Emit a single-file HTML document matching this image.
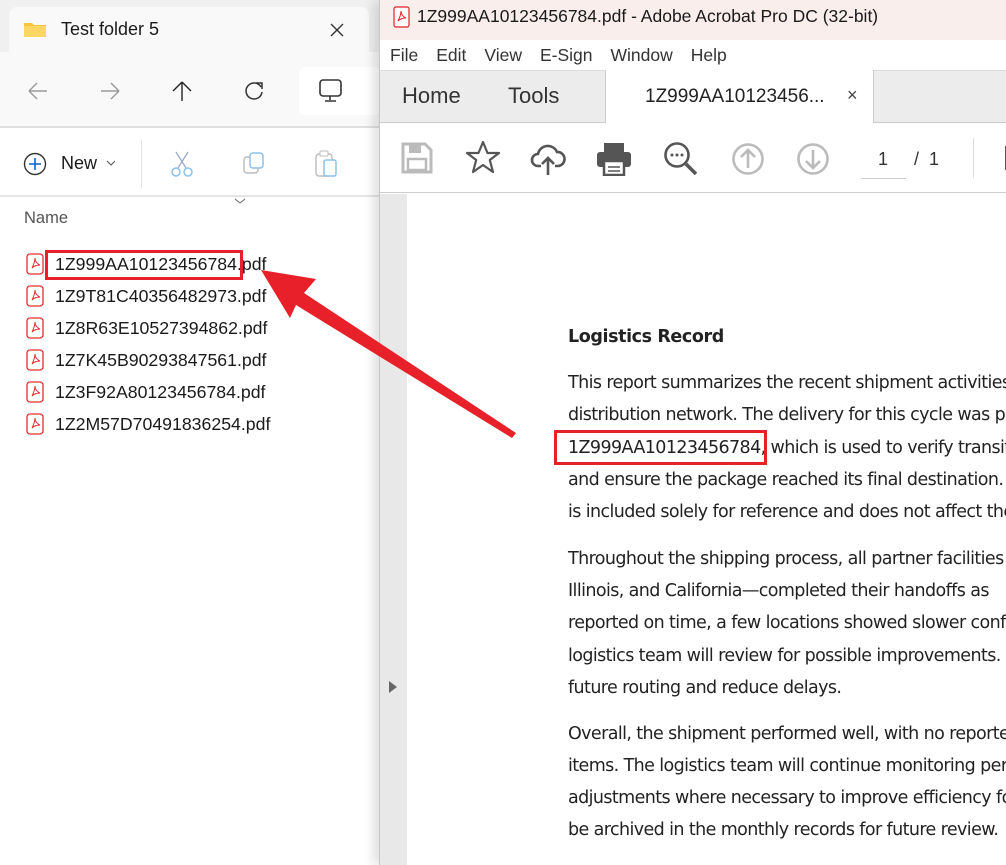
<!DOCTYPE html>
<html><head><meta charset="utf-8"><style>
*{margin:0;padding:0;box-sizing:border-box}
body{width:1006px;height:865px;overflow:hidden;position:relative;background:#fff;font-family:"Segoe UI","Liberation Sans",sans-serif}
.abs{position:absolute}
#exp{left:0;top:0;width:380px;height:865px;background:#fff;overflow:hidden}
#acr{left:379px;top:0;width:627px;height:865px;background:#fff;overflow:hidden;border-left:1px solid #c8c8c8;box-shadow:-6px 0 10px rgba(0,0,0,.12)}
.file{position:absolute;left:26px;font-size:17.7px;color:#1a1a1a;display:flex;align-items:center}
.file svg{margin-right:11px}
.doc{position:absolute;left:188px;font-size:17.5px;color:#222;white-space:nowrap;font-family:"DejaVu Sans","Liberation Sans",sans-serif;letter-spacing:-0.6px}
.menu span{margin-right:18px}
</style></head><body>
<div id="exp" class="abs">
  <div class="abs" style="left:0;top:0;width:380px;height:127px;background:#f0f0f0"></div>
  <div class="abs" style="left:9px;top:7px;width:360px;height:50px;background:#f9f9f9;border-radius:8px 8px 0 0"></div>
  <div class="abs" style="left:0;top:52px;width:380px;height:75px;background:#f9f9f9"></div>
  <svg class="abs" style="left:23px;top:20px" width="24" height="18"><path d="M1 3h8l2 2h12v12H1z" fill="#f5c542"/><path d="M1 6h22v11H1z" fill="#fcd663"/></svg>
  <div class="abs" style="left:61px;top:19px;font-size:18px;color:#1a1a1a">Test folder 5</div>
  <svg class="abs" style="left:329px;top:22px" width="16" height="16"><path d="M2 2L14 14M14 2L2 14" stroke="#333" stroke-width="1.4"/></svg>
  <svg class="abs" style="left:26px;top:80px" width="24" height="22"><path d="M3 11H21M3 11L11 3M3 11L11 19" stroke="#999" stroke-width="1.4" fill="none"/></svg>
  <svg class="abs" style="left:98px;top:80px" width="24" height="22"><path d="M3 11H21M21 11L13 3M21 11L13 19" stroke="#999" stroke-width="1.4" fill="none"/></svg>
  <svg class="abs" style="left:170px;top:79px" width="24" height="24"><path d="M12 22V3M12 3L3 12M12 3L21 12" stroke="#222" stroke-width="1.4" fill="none"/></svg>
  <svg class="abs" style="left:243px;top:80px" width="22" height="22"><path d="M18 7A8 8 0 1 0 19 12" stroke="#333" stroke-width="1.5" fill="none"/><path d="M13 3h6v6" stroke="#333" stroke-width="1.5" fill="none"/></svg>
  <div class="abs" style="left:299px;top:67px;width:81px;height:48px;background:#fff;border-radius:5px"></div>
  <svg class="abs" style="left:318px;top:78px" width="26" height="26"><rect x="2" y="2" width="21" height="16" rx="3" stroke="#333" stroke-width="1.6" fill="none"/><path d="M12 18v4M7 23h11" stroke="#333" stroke-width="1.6"/></svg>
  <div class="abs" style="left:0;top:126px;width:380px;height:2px;background:#e0e0e0"></div>
  <svg class="abs" style="left:23px;top:152px" width="24" height="24"><circle cx="12" cy="12" r="10.5" stroke="#333" stroke-width="1.4" fill="none"/><path d="M12 6v12M6 12h12" stroke="#0a64c8" stroke-width="1.6"/></svg>
  <div class="abs" style="left:61px;top:153px;font-size:18px;color:#1a1a1a">New</div>
  <svg class="abs" style="left:106px;top:160px" width="10" height="6"><path d="M1 1L5 5L9 1" stroke="#555" fill="none"/></svg>
  <div class="abs" style="left:141px;top:140px;width:1px;height:48px;background:#e5e5e5"></div>
  <svg class="abs" style="left:170px;top:150px" width="24" height="28"><path d="M6 2L16 18M18 2L8 18" stroke="#9ac" stroke-width="1.3"/><circle cx="6" cy="22" r="4" stroke="#8bc0ea" stroke-width="1.5" fill="none"/><circle cx="18" cy="22" r="4" stroke="#8bc0ea" stroke-width="1.5" fill="none"/></svg>
  <svg class="abs" style="left:242px;top:151px" width="24" height="26"><rect x="2" y="6" width="14" height="16" rx="3" stroke="#bbb" stroke-width="1.4" fill="none"/><rect x="8" y="2" width="13" height="15" rx="3" stroke="#8bc0ea" stroke-width="1.5" fill="#fff"/></svg>
  <svg class="abs" style="left:314px;top:150px" width="24" height="28"><rect x="2" y="4" width="16" height="22" rx="3" stroke="#bbb" stroke-width="1.4" fill="none"/><rect x="6" y="1" width="8" height="5" rx="1" stroke="#bbb" fill="#fff"/><rect x="10" y="10" width="12" height="16" rx="2" stroke="#8bc0ea" stroke-width="1.5" fill="#fff"/></svg>
  <div class="abs" style="left:0;top:195px;width:380px;height:2px;background:#e5e5e5"></div>
  <svg class="abs" style="left:234px;top:198px" width="12" height="7"><path d="M1 1L6 5L11 1" stroke="#666" fill="none"/></svg>
  <div class="abs" style="left:24px;top:209px;font-size:16.5px;color:#555">Name</div>
  <div class="file" style="top:253px"><svg width="18" height="22"><rect x="1" y="1" width="16" height="20" rx="3" fill="#fff" stroke="#e03030" stroke-width="1.3"/><path d="M6 15c2-4 3-7 3-10 0 3 2 6 5 7-3 0-6 1-8 3z" stroke="#e03030" fill="none"/></svg>1Z999AA10123456784.pdf</div>
  <div class="file" style="top:285px"><svg width="18" height="22"><rect x="1" y="1" width="16" height="20" rx="3" fill="#fff" stroke="#e03030" stroke-width="1.3"/><path d="M6 15c2-4 3-7 3-10 0 3 2 6 5 7-3 0-6 1-8 3z" stroke="#e03030" fill="none"/></svg>1Z9T81C40356482973.pdf</div>
  <div class="file" style="top:317px"><svg width="18" height="22"><rect x="1" y="1" width="16" height="20" rx="3" fill="#fff" stroke="#e03030" stroke-width="1.3"/><path d="M6 15c2-4 3-7 3-10 0 3 2 6 5 7-3 0-6 1-8 3z" stroke="#e03030" fill="none"/></svg>1Z8R63E10527394862.pdf</div>
  <div class="file" style="top:349px"><svg width="18" height="22"><rect x="1" y="1" width="16" height="20" rx="3" fill="#fff" stroke="#e03030" stroke-width="1.3"/><path d="M6 15c2-4 3-7 3-10 0 3 2 6 5 7-3 0-6 1-8 3z" stroke="#e03030" fill="none"/></svg>1Z7K45B90293847561.pdf</div>
  <div class="file" style="top:381px"><svg width="18" height="22"><rect x="1" y="1" width="16" height="20" rx="3" fill="#fff" stroke="#e03030" stroke-width="1.3"/><path d="M6 15c2-4 3-7 3-10 0 3 2 6 5 7-3 0-6 1-8 3z" stroke="#e03030" fill="none"/></svg>1Z3F92A80123456784.pdf</div>
  <div class="file" style="top:413px"><svg width="18" height="22"><rect x="1" y="1" width="16" height="20" rx="3" fill="#fff" stroke="#e03030" stroke-width="1.3"/><path d="M6 15c2-4 3-7 3-10 0 3 2 6 5 7-3 0-6 1-8 3z" stroke="#e03030" fill="none"/></svg>1Z2M57D70491836254.pdf</div>
  <div class="abs" style="left:45px;top:250px;width:198px;height:30px;border:3px solid #e8202a"></div>
</div>
<div id="acr" class="abs">
  <div class="abs" style="left:0;top:0;width:627px;height:40px;background:#f9eeec"></div>
  <svg class="abs" style="left:13px;top:6px" width="17" height="22"><rect x="1" y="1" width="15" height="20" rx="2" fill="#fff" stroke="#e02020" stroke-width="1.2"/><path d="M5 15c2-4 3-7 3-10 0 3 2 6 5 7-3 0-6 1-8 3z" stroke="#e02020" fill="none"/></svg>
  <div class="abs" style="left:37px;top:6px;font-size:17.5px;color:#1a1a1a">1Z999AA10123456784.pdf - Adobe Acrobat Pro DC (32-bit)</div>
  <div class="abs menu" style="left:10px;top:45px;font-size:17.5px;color:#333"><span>File</span><span>Edit</span><span>View</span><span>E-Sign</span><span>Window</span><span>Help</span></div>
  <div class="abs" style="left:0;top:70px;width:627px;height:53px;background:#ececec;border-top:1px solid #ddd;border-bottom:1px solid #ccc"></div>
  <div class="abs" style="left:22px;top:83px;font-size:22px;color:#333">Home</div>
  <div class="abs" style="left:128px;top:83px;font-size:22px;color:#333">Tools</div>
  <div class="abs" style="left:225px;top:70px;width:269px;height:54px;background:#fff;border-left:1px solid #ccc;border-right:1px solid #ccc"></div>
  <div class="abs" style="left:265px;top:86px;font-size:19px;color:#222">1Z999AA10123456...</div>
  <div class="abs" style="left:467px;top:85px;font-size:18px;color:#444">×</div>
  <div class="abs" style="left:0;top:123px;width:627px;height:70px;background:#fff;border-bottom:1px solid #ccc"></div>
  <svg class="abs" style="left:21px;top:142px" width="32" height="32"><path d="M2 2h22l6 6v22H2z" fill="none" stroke="#bbb" stroke-width="3"/><rect x="8" y="3" width="12" height="8" fill="#bbb"/><rect x="7" y="17" width="18" height="11" fill="none" stroke="#bbb" stroke-width="2.5"/></svg>
  <svg class="abs" style="left:85px;top:140px" width="36" height="36"><path d="M18 2L22.5 13H34L24.8 20L28 32L18 25L8 32L11.2 20L2 13H13.5Z" fill="none" stroke="#555" stroke-width="2.2" stroke-linejoin="round"/></svg>
  <svg class="abs" style="left:150px;top:142px" width="36" height="34"><path d="M11 24H8A6 6 0 0 1 8 12A10 10 0 0 1 27 10A7 7 0 0 1 28 24h-3" fill="none" stroke="#555" stroke-width="2.6"/><path d="M18 33V16M12 22l6-6 6 6" fill="none" stroke="#555" stroke-width="2.6"/></svg>
  <svg class="abs" style="left:216px;top:142px" width="36" height="34"><rect x="8" y="1" width="20" height="9" fill="#555"/><rect x="1" y="10" width="34" height="15" rx="3" fill="#555"/><rect x="8" y="19" width="20" height="14" fill="#fff" stroke="#555" stroke-width="2.5"/><path d="M12 25h12M12 29h12" stroke="#555" stroke-width="1.5"/></svg>
  <svg class="abs" style="left:283px;top:141px" width="36" height="36"><circle cx="14" cy="14" r="11.5" fill="none" stroke="#555" stroke-width="2.6"/><path d="M23 23L33 33" stroke="#555" stroke-width="3.5"/><circle cx="9" cy="14" r="1.5" fill="#555"/><circle cx="14" cy="14" r="1.5" fill="#555"/><circle cx="19" cy="14" r="1.5" fill="#555"/></svg>
  <svg class="abs" style="left:351px;top:142px" width="34" height="34"><circle cx="17" cy="17" r="14.5" fill="none" stroke="#bbb" stroke-width="2.6"/><path d="M17 26V9M10 15l7-7 7 7" fill="none" stroke="#bbb" stroke-width="2.6"/></svg>
  <svg class="abs" style="left:416px;top:142px" width="34" height="34"><circle cx="17" cy="17" r="14.5" fill="none" stroke="#bbb" stroke-width="2.6"/><path d="M17 8V25M10 19l7 7 7-7" fill="none" stroke="#bbb" stroke-width="2.6"/></svg>
  <div class="abs" style="left:498px;top:149px;font-size:18px;color:#333">1</div>
  <div class="abs" style="left:481px;top:178px;width:45px;height:1px;background:#ccc"></div>
  <div class="abs" style="left:534px;top:149px;font-size:18px;color:#333">/ &nbsp;1</div>
  <div class="abs" style="left:593px;top:138px;width:1px;height:40px;background:#ddd"></div>
  <div class="abs" style="left:625px;top:146px;width:3px;height:24px;background:#555"></div>
  <div class="abs" style="left:0;top:194px;width:27px;height:671px;background:#e8e8e8"></div>
  <svg class="abs" style="left:8px;top:680px" width="10" height="14"><path d="M1 1L9 7L1 13Z" fill="#666"/></svg>
  <div class="doc" style="top:327px;font-weight:bold;letter-spacing:-0.4px">Logistics Record</div>
  <div class="doc" style="top:373px">This report summarizes the recent shipment activities within the</div>
  <div class="doc" style="top:405px">distribution network. The delivery for this cycle was processed</div>
  <div class="doc" style="top:438px">1Z999AA10123456784, which is used to verify transit status</div>
  <div class="doc" style="top:470px">and ensure the package reached its final destination. This</div>
  <div class="doc" style="top:502px">is included solely for reference and does not affect the</div>
  <div class="doc" style="top:549px">Throughout the shipping process, all partner facilities</div>
  <div class="doc" style="top:581px">Illinois, and California—completed their handoffs as</div>
  <div class="doc" style="top:613px">reported on time, a few locations showed slower conf</div>
  <div class="doc" style="top:646px">logistics team will review for possible improvements.</div>
  <div class="doc" style="top:678px">future routing and reduce delays.</div>
  <div class="doc" style="top:724px">Overall, the shipment performed well, with no reported</div>
  <div class="doc" style="top:756px">items. The logistics team will continue monitoring per</div>
  <div class="doc" style="top:788px">adjustments where necessary to improve efficiency for</div>
  <div class="doc" style="top:820px">be archived in the monthly records for future review.</div>
  <div class="abs" style="left:174px;top:430px;width:213px;height:35px;border:3px solid #e8202a"></div>
</div>
<svg class="abs" style="left:0;top:0" width="1006" height="865">
  <path d="M261 270L316 279L304 293L516 433L512 438L296 305L290 318Z" fill="#e8202a"/>
</svg>
</body></html>
